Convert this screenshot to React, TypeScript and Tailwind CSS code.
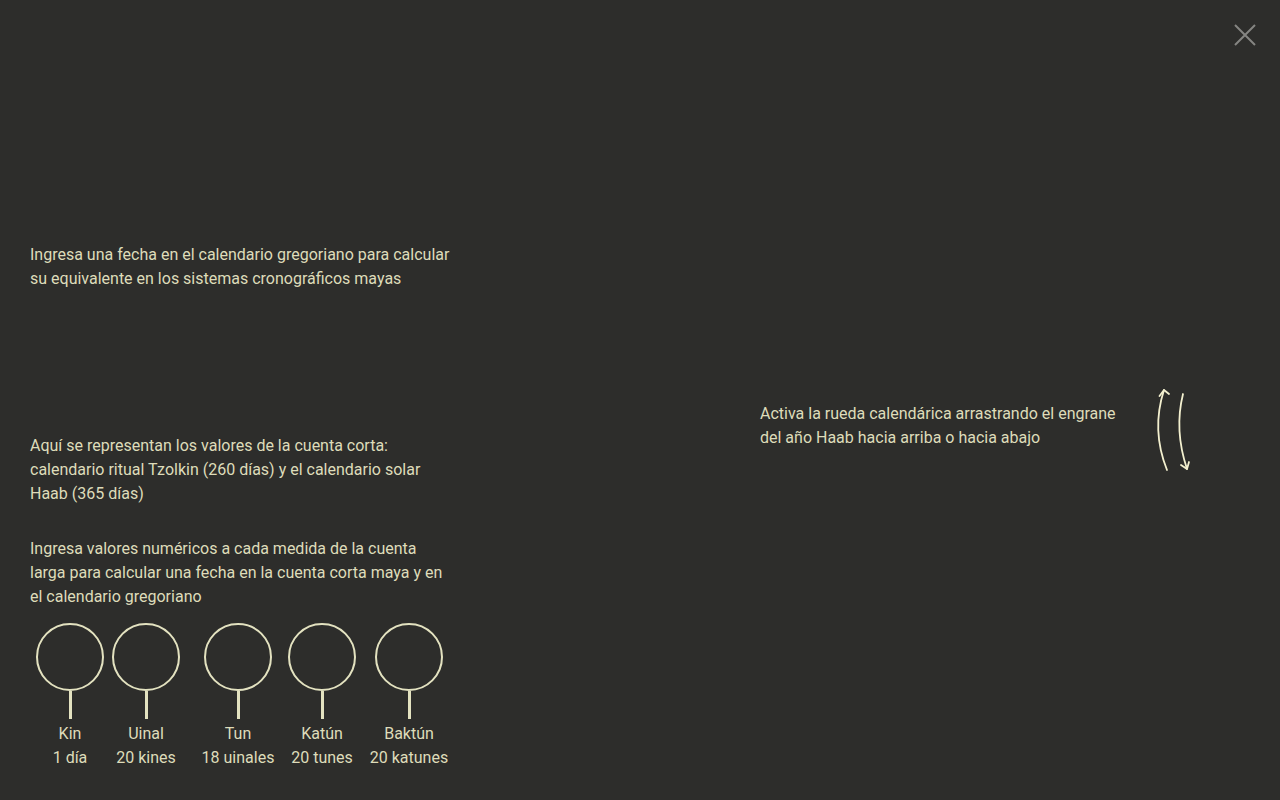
import React from "react";

const units = [
  { name: "Kin", sub: "1 día", ml: "ml-[2px]" },
  { name: "Uinal", sub: "20 kines", ml: "ml-0" },
  { name: "Tun", sub: "18 uinales", ml: "ml-[16px]" },
  { name: "Katún", sub: "20 tunes", ml: "ml-[8px]" },
  { name: "Baktún", sub: "20 katunes", ml: "ml-[11px]" },
];

export default function App() {
  return (
    <div
      className="relative w-[1280px] h-[800px] overflow-hidden bg-[#2d2d2b] text-[#dedcba] text-[16px] leading-[24px]"
      style={{ fontFamily: "Roboto, 'Liberation Sans', sans-serif" }}
    >
      {/* Close button */}
      <button className="absolute left-[1230px] top-[20px] w-[30px] h-[30px] flex items-center justify-center">
        <svg width="24" height="24" viewBox="0 0 24 24" fill="none">
          <path d="M2 2 L22 22 M22 2 L2 22" stroke="#858582" strokeWidth="2" />
        </svg>
      </button>

      {/* Left annotations */}
      <div className="absolute left-[30px] top-[243px] w-[425px]">
        <p>
          Ingresa una fecha en el calendario gregoriano para calcular su
          equivalente en los sistemas cronográficos mayas
        </p>
      </div>

      <div className="absolute left-[30px] top-[434px] w-[425px] flex flex-col gap-[31px]">
        <p>
          Aquí se representan los valores de la cuenta corta: calendario ritual
          Tzolkin (260 días) y el calendario solar Haab (365 días)
        </p>
        <p>
          Ingresa valores numéricos a cada medida de la cuenta larga para
          calcular una fecha en la cuenta corta maya y en el calendario
          gregoriano
        </p>
      </div>

      {/* Long count units */}
      <div className="absolute left-[30px] top-[623px] flex">
        {units.map((u) => (
          <div
            key={u.name}
            className={`${u.ml} w-[76px] flex flex-col items-center`}
          >
            <div className="w-[68px] h-[68px] rounded-full border-[2.5px] border-[#e3e2c0]" />
            <div className="w-[3px] h-[28px] bg-[#e3e2c0]" />
            <div className="mt-[3px] whitespace-nowrap text-center">{u.name}</div>
            <div className="whitespace-nowrap text-center">{u.sub}</div>
          </div>
        ))}
      </div>

      {/* Right annotation */}
      <div className="absolute left-[760px] top-[402px] w-[370px]">
        <p>
          Activa la rueda calendárica arrastrando el engrane del año Haab hacia
          arriba o hacia abajo
        </p>
      </div>

      <svg
        className="absolute left-[1150px] top-[383px]"
        width="45"
        height="95"
        viewBox="0 0 45 95"
        fill="none"
        stroke="#f3f0cf"
        strokeWidth="1.8"
        strokeLinecap="round"
        strokeLinejoin="round"
      >
        <path d="M17 87 Q1 47 14 7" />
        <path d="M9.5 13 L14 7 L19 11" />
        <path d="M33 11 Q24 47 37 86" />
        <path d="M31 82 L37 86 L39 79" />
      </svg>
    </div>
  );
}
